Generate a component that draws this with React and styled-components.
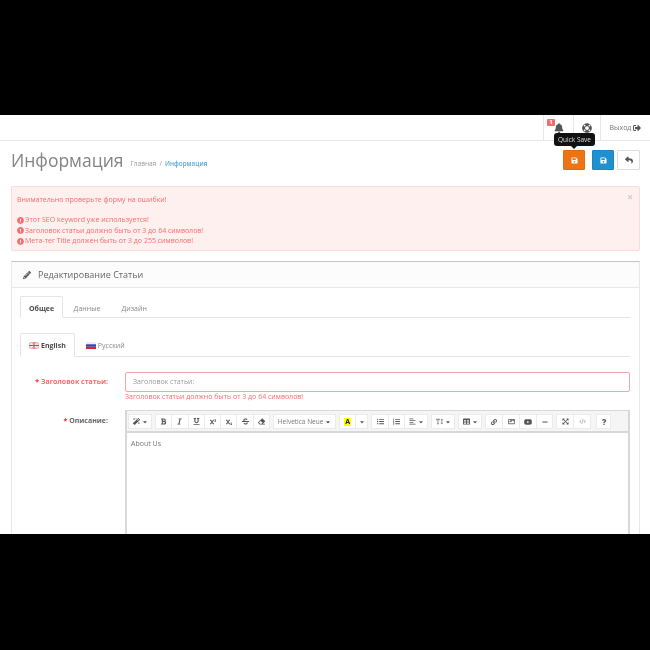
import React from 'react';
import styled, { createGlobalStyle } from 'styled-components';
import {
  FaAlignLeft, FaExpandArrowsAlt, FaBell, FaBold, FaCaretDown, FaCode, FaEraser, FaExclamationCircle,
  FaImage, FaItalic, FaLifeRing, FaLink, FaListOl, FaListUl, FaMagic, FaMinus, FaPencilAlt,
  FaQuestion, FaReply, FaSave, FaSignOutAlt, FaStrikethrough, FaSubscript, FaSuperscript,
  FaTable, FaTextHeight, FaUnderline, FaYoutube,
} from 'react-icons/fa';

const GlobalStyle = createGlobalStyle`
  html, body {
    margin: 0;
    padding: 0;
    background: #000;
  }
  * {
    box-sizing: border-box;
  }
  body {
    font-family: "Open Sans", "Liberation Sans", sans-serif;
  }
`;

const Frame = styled.div`
  width: 650px;
  height: 650px;
  background: #000;
  padding-top: 115px;
`;
const Screen = styled.div`
  width: 650px;
  height: 419px;
  background: #fff;
  overflow: hidden;
  filter: blur(0.35px);
`;
const TopBar = styled.div`
  height: 26px;
  border-bottom: 1px solid #e6e6e6;
  display: flex;
  justify-content: flex-end;
`;
const TopItem = styled.div`
  position: relative;
  width: ${(p) => p.$w}px;
  border-left: 1px solid #e6e6e6;
  display: flex;
  align-items: center;
  justify-content: center;
  gap: 2px;
  font-size: 7px;
  color: #777;
  svg {
    color: #555;
  }
`;
const Badge = styled.span`
  position: absolute;
  left: 3px;
  top: 4px;
  width: 8px;
  height: 7px;
  border-radius: 1px;
  background: #f56b6b;
  color: #fff;
  font-size: 6px;
  font-weight: 700;
  line-height: 7px;
  text-align: center;
`;
const Tooltip = styled.div`
  position: absolute;
  left: 10px;
  top: 18px;
  width: 41px;
  height: 13px;
  border-radius: 3px;
  background: #111;
  color: #ddd;
  font-size: 6.5px;
  line-height: 13px;
  text-align: center;
  white-space: nowrap;
  z-index: 2;
  &::after {
    content: '';
    position: absolute;
    left: 17px;
    top: 13px;
    border: 3px solid transparent;
    border-top-color: #111;
    border-bottom: 0;
  }
`;
const PageHead = styled.div`
  height: 45px;
  padding: 9px 10px 0 11px;
  display: flex;
  align-items: flex-start;
`;
const Title = styled.h1`
  margin: 0;
  font-size: 17.5px;
  font-weight: 400;
  line-height: 20px;
  color: #848484;
`;
const Crumbs = styled.div`
  margin: 8px 0 0 7px;
  font-size: 6.5px;
  line-height: 12px;
  color: #999;
  b {
    font-size: 6.3px;
    font-weight: 600;
    color: #5ba8d8;
    margin-left: 3px;
  }
`;
const Actions = styled.div`
  margin-left: auto;
  display: flex;
  gap: 3px;
`;
const ActionButton = styled.div`
  width: ${(p) => p.$w || 22}px;
  height: 20px;
  margin-left: ${(p) => p.$gap || 0}px;
  border-radius: 1px;
  border: 1px solid ${(p) => p.$border};
  background: ${(p) => p.$bg};
  color: ${(p) => p.$color};
  display: flex;
  align-items: center;
  justify-content: center;
`;
const Alert = styled.div`
  margin: 0 10px 0 11px;
  height: 65px;
  padding: 8px 5px;
  background: #fff0f0;
  border: 1px solid #fbdcdc;
  border-radius: 2px;
  position: relative;
  color: #f56c6c;
  font-size: 7px;
  line-height: 10.5px;
`;
const AlertLine = styled.div`
  display: flex;
  align-items: center;
  gap: 1px;
  margin-top: ${(p) => p.$top || 0}px;
`;
const Close = styled.span`
  position: absolute;
  right: 6px;
  top: 5px;
  font-size: 10px;
  color: #ccc;
  font-weight: 700;
`;
const Panel = styled.div`
  margin: 10px 10px 0 11px;
  border: 1px solid #e8e8e8;
  border-top: 1px solid #c4c4c4;
  height: 300px;
`;
const PanelHead = styled.div`
  height: 26px;
  background: #fcfcfc;
  border-bottom: 1px solid #e8e8e8;
  display: flex;
  align-items: center;
  gap: 7px;
  padding-left: 11px;
  font-size: 9px;
  color: #666;
  svg {
    color: #555;
  }
`;
const PanelBody = styled.div`
  padding: 8px 9px 0 8px;
`;
const Tabs = styled.div`
  height: ${(p) => p.$h}px;
  display: flex;
  border-bottom: 1px solid #e4e4e4;
  margin-bottom: ${(p) => p.$mb}px;
`;
const Tab = styled.div`
  padding: ${(p) => p.$top || 0}px ${(p) => p.$pad || 9.5}px 0;
  display: flex;
  align-items: center;
  gap: 2px;
  font-size: 7px;
  color: ${(p) => (p.$active ? '#4a4a4a' : '#888')};
  font-weight: ${(p) => (p.$active ? 700 : 400)};
  border: 1px solid ${(p) => (p.$active ? '#e4e4e4' : 'transparent')};
  border-bottom: ${(p) => (p.$active ? '1px solid #fff' : '0')};
  border-radius: 2px 2px 0 0;
  margin-bottom: -1px;
  background: ${(p) => (p.$active ? '#fff' : 'transparent')};
`;
const FormRow = styled.div`
  display: grid;
  grid-template-columns: 88px 505px;
  column-gap: 17px;
  margin-bottom: ${(p) => p.$mb || 0}px;
`;
const Label = styled.label`
  text-align: right;
  font-size: 7px;
  font-weight: 700;
  line-height: ${(p) => p.$lh || 10}px;
  color: ${(p) => (p.$error ? '#f56c6c' : '#666')};
  &::before {
    content: '* ';
    color: #f22;
  }
`;
const TextInput = styled.div`
  height: 20px;
  border: 1px solid #f5a3a3;
  border-radius: 2px;
  padding-left: 7px;
  font-size: 7px;
  line-height: 18px;
  color: #999;
`;
const FieldError = styled.div`
  font-size: 7px;
  line-height: 10px;
  color: #f56c6c;
`;
const Editor = styled.div`
  border: 1px solid #d8d8d8;
  border-left-width: 2px;
  border-right-width: 2px;
  height: 200px;
`;
const Toolbar = styled.div`
  height: 22px;
  background: #f5f5f5;
  border-bottom: 2px solid #d8d8d8;
  padding: 3px 0 0 2px;
  display: flex;
`;
const Group = styled.div`
  display: flex;
  margin-right: ${(p) => p.$mr ?? 4}px;
`;
const ToolButton = styled.div`
  width: ${(p) => p.$w || 17.3}px;
  height: 15px;
  margin-left: -1px;
  background: #fff;
  border: 1px solid #ebebeb;
  display: flex;
  align-items: center;
  justify-content: center;
  gap: 2px;
  font-size: 6.5px;
  color: ${(p) => p.$color || '#555'};
  white-space: nowrap;
  svg {
    flex: none;
  }
`;
const ColorA = styled.span`
  background: #ff0;
  color: #222;
  font-weight: 700;
  font-size: 7px;
  line-height: 8px;
  padding: 0 1px;
`;
const EditorText = styled.div`
  padding: 6px 4px;
  font-size: 7px;
  line-height: 10px;
  color: #777;
`;

const UkFlag = () => (
  <svg width="10" height="7" viewBox="0 0 10 7">
    <rect width="10" height="7" fill="#c9aeb8" />
    <path d="M0 0L10 7M10 0L0 7" stroke="#efe6e8" strokeWidth="1.2" />
    <path d="M5 0V7M0 3.5H10" stroke="#fff" strokeWidth="2.2" />
    <path d="M5 0V7M0 3.5H10" stroke="#d8434f" strokeWidth="1.2" />
  </svg>
);
const RuFlag = () => (
  <svg width="10" height="7" viewBox="0 0 10 7">
    <rect width="10" height="2.3" fill="#eee" />
    <rect y="2.3" width="10" height="2.4" fill="#2c3ec4" />
    <rect y="4.7" width="10" height="2.3" fill="#e0202c" />
  </svg>
);

const errors = [
  'Этот SEO keyword уже используется!',
  'Заголовок статьи должно быть от 3 до 64 символов!',
  'Мета-тег Title должен быть от 3 до 255 символов!',
];

const App = () => (
  <Frame>
    <GlobalStyle />
    <Screen>
      <TopBar>
        <TopItem $w={30}>
          <FaBell size={10} />
          <Badge>1</Badge>
          <Tooltip>Quick Save</Tooltip>
        </TopItem>
        <TopItem $w={27}>
          <FaLifeRing size={10} />
        </TopItem>
        <TopItem $w={50}>
          Выход <FaSignOutAlt size={8} />
        </TopItem>
      </TopBar>
      <PageHead>
        <Title>Информация</Title>
        <Crumbs>
          Главная &nbsp;/<b>Информация</b>
        </Crumbs>
        <Actions>
          <ActionButton $bg="#ec7414" $border="#e06c10" $color="#fff">
            <FaSave size={7} />
          </ActionButton>
          <ActionButton $bg="#1f91d0" $border="#1a86c2" $color="#fff" $gap={4}>
            <FaSave size={7} />
          </ActionButton>
          <ActionButton $w={23} $bg="#fff" $border="#ddd" $color="#555">
            <FaReply size={8} />
          </ActionButton>
        </Actions>
      </PageHead>
      <Alert>
        <Close>×</Close>
        <AlertLine>Внимательно проверьте форму на ошибки!</AlertLine>
        {errors.map((text, i) => (
          <AlertLine key={text} $top={i === 0 ? 9.5 : 0}>
            <FaExclamationCircle size={7} /> {text}
          </AlertLine>
        ))}
      </Alert>
      <Panel>
        <PanelHead>
          <FaPencilAlt size={8} />
          Редактирование Статьи
        </PanelHead>
        <PanelBody>
          <Tabs $h={22} $mb={15}>
            <Tab $active $pad={8} $top={2}>Общее</Tab>
            <Tab $top={2}>Данные</Tab>
            <Tab $top={2}>Дизайн</Tab>
          </Tabs>
          <Tabs $h={24} $mb={15}>
            <Tab $active $pad={8}><UkFlag /> English</Tab>
            <Tab $pad={10}><RuFlag /> Русский</Tab>
          </Tabs>
          <FormRow $mb={8}>
            <Label $error $lh={20}>Заголовок статьи:</Label>
            <div>
              <TextInput>Заголовок статьи:</TextInput>
              <FieldError>Заголовок статьи должно быть от 3 до 64 символов!</FieldError>
            </div>
          </FormRow>
          <FormRow>
            <Label $lh={22}>Описание:</Label>
            <Editor>
              <Toolbar>
                <Group>
                  <ToolButton $w={24}><FaMagic size={7} /><FaCaretDown size={6} /></ToolButton>
                </Group>
                <Group>
                  <ToolButton><FaBold size={7} /></ToolButton>
                  <ToolButton><FaItalic size={7} /></ToolButton>
                  <ToolButton><FaUnderline size={7} /></ToolButton>
                  <ToolButton><FaSuperscript size={6} /></ToolButton>
                  <ToolButton><FaSubscript size={6} /></ToolButton>
                  <ToolButton><FaStrikethrough size={7} /></ToolButton>
                  <ToolButton><FaEraser size={7} /></ToolButton>
                </Group>
                <Group>
                  <ToolButton $w={63} $color="#777">Helvetica Neue <FaCaretDown size={6} color="#444" /></ToolButton>
                </Group>
                <Group>
                  <ToolButton $w={17}><ColorA>A</ColorA></ToolButton>
                  <ToolButton $w={13}><FaCaretDown size={6} /></ToolButton>
                </Group>
                <Group>
                  <ToolButton $w={18}><FaListUl size={7} /></ToolButton>
                  <ToolButton $w={17}><FaListOl size={7} /></ToolButton>
                  <ToolButton $w={24}><FaAlignLeft size={7} /><FaCaretDown size={6} /></ToolButton>
                </Group>
                <Group>
                  <ToolButton $w={24}><FaTextHeight size={7} color="#888" /><FaCaretDown size={6} /></ToolButton>
                </Group>
                <Group>
                  <ToolButton $w={24}><FaTable size={7} /><FaCaretDown size={6} /></ToolButton>
                </Group>
                <Group>
                  <ToolButton $w={18}><FaLink size={6} /></ToolButton>
                  <ToolButton $w={18}><FaImage size={7} color="#777" /></ToolButton>
                  <ToolButton $w={18}><FaYoutube size={8} /></ToolButton>
                  <ToolButton $w={17}><FaMinus size={6} /></ToolButton>
                </Group>
                <Group $mr={6}>
                  <ToolButton $w={18}><FaExpandArrowsAlt size={7} /></ToolButton>
                  <ToolButton $w={18}><FaCode size={7} color="#bbb" /></ToolButton>
                </Group>
                <Group>
                  <ToolButton $w={15}><FaQuestion size={6} /></ToolButton>
                </Group>
              </Toolbar>
              <EditorText>About Us</EditorText>
            </Editor>
          </FormRow>
        </PanelBody>
      </Panel>
    </Screen>
  </Frame>
);

export default App;
